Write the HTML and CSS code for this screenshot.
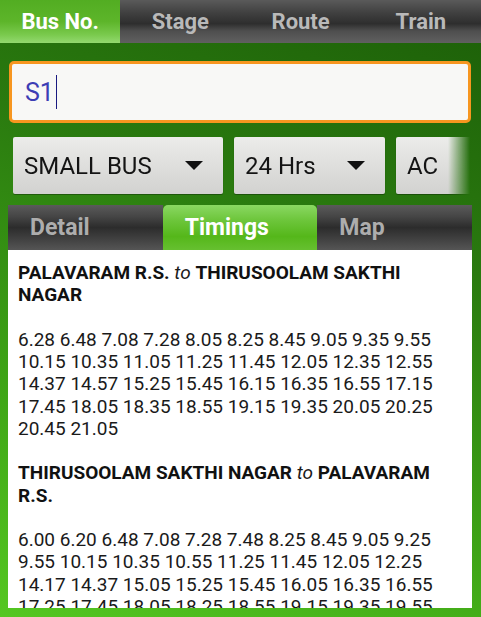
FILE: index.html
```html
<!DOCTYPE html>
<html>
<head>
<meta charset="utf-8">
<link rel="stylesheet" href="styles.css">
</head>
<body>
<div class="screen">
  <nav class="topbar">
    <div class="toptab active">Bus No.</div>
    <div class="toptab">Stage</div>
    <div class="toptab">Route</div>
    <div class="toptab">Train</div>
  </nav>
  <div class="search"><span class="query">S1</span><span class="caret"></span></div>
  <div class="filters">
    <div class="spinner s1"><span>SMALL BUS</span><i class="arrow"></i></div>
    <div class="spinner s2"><span>24 Hrs</span><i class="arrow"></i></div>
    <div class="spinner s3"><span>AC</span><i class="arrow"></i></div>
  </div>
  <div class="panel">
    <div class="subtabs">
      <div class="subtab">Detail</div>
      <div class="subtab active">Timings</div>
      <div class="subtab">Map</div>
    </div>
    <div class="content">
      <p class="route"><b>PALAVARAM R.S.</b> <i>to</i> <b>THIRUSOOLAM SAKTHI NAGAR</b></p>
      <p class="times">6.28 6.48 7.08 7.28 8.05 8.25 8.45 9.05 9.35 9.55 10.15 10.35 11.05 11.25 11.45 12.05 12.35 12.55 14.37 14.57 15.25 15.45 16.15 16.35 16.55 17.15 17.45 18.05 18.35 18.55 19.15 19.35 20.05 20.25 20.45 21.05</p>
      <p class="route"><b>THIRUSOOLAM SAKTHI NAGAR</b> <i>to</i> <b>PALAVARAM R.S.</b></p>
      <p class="times">6.00 6.20 6.48 7.08 7.28 7.48 8.25 8.45 9.05 9.25 9.55 10.15 10.35 10.55 11.25 11.45 12.05 12.25 14.17 14.37 15.05 15.25 15.45 16.05 16.35 16.55 17.25 17.45 18.05 18.25 18.55 19.15 19.35 19.55 20.15 20.35 21.05</p>
    </div>
  </div>
</div>
</body>
</html>
```
FILE: styles.css
```css
html, body {
  margin: 0;
  padding: 0;
}
body {
  width: 481px;
  height: 617px;
  overflow: hidden;
  font-family: Roboto, "Liberation Sans", sans-serif;
}
.screen {
  height: 617px;
  display: flex;
  flex-direction: column;
  background: linear-gradient(200deg, #1c5e08 0%, #2a7a0f 35%, #3ea416 70%, #55c722 100%);
  overflow: hidden;
}
.topbar {
  display: flex;
  height: 43px;
  flex: none;
}
.toptab {
  flex: 1;
  display: flex;
  align-items: center;
  justify-content: center;
  font-weight: 700;
  font-size: 22px;
  color: #b9b9b9;
  background: linear-gradient(#5a5a5a 0%, #404040 30%, #2e2e2e 55%, #4e4e4e 72%, #606060 100%);
}
.toptab.active {
  color: #fff;
  background: linear-gradient(#52ad22 0%, #5db52a 50%, #79c94c 80%, #93d96f 100%);
}
.search {
  margin: 18px 10px 0 9px;
  height: 56px;
  border: 3px solid #f7961f;
  border-radius: 5px;
  background: #f8f8f6;
  display: flex;
  align-items: center;
  padding-left: 13px;
  flex: none;
}
.query {
  font-size: 25px;
  color: #3d3db4;
}
.caret {
  width: 1.5px;
  height: 34px;
  background: #1a1a80;
  margin-left: 2px;
}
.filters {
  display: flex;
  gap: 11px;
  margin: 14px 11px 0 13px;
  height: 58px;
  overflow: hidden;
  flex: none;
  -webkit-mask-image: linear-gradient(to right, #000 calc(100% - 22px), transparent);
  mask-image: linear-gradient(to right, #000 calc(100% - 22px), transparent);
}
.spinner {
  flex: none;
  height: 57px;
  display: flex;
  align-items: center;
  justify-content: space-between;
  padding: 0 20px 0 11px;
  box-sizing: border-box;
  background: linear-gradient(#ececea, #dcdcda 60%, #d2d2d0);
  border-radius: 2px;
  box-shadow: 0 1px 1px rgba(0,0,0,.35);
  font-size: 24px;
  color: #141414;
}
.s1 { width: 210px; }
.s2 { width: 151px; }
.s3 { width: 130px; }
.arrow {
  width: 0;
  height: 0;
  border-left: 9px solid transparent;
  border-right: 9px solid transparent;
  border-top: 9px solid #111;
}
.panel {
  margin: 10px 9px 9px 8px;
  flex: 1;
  display: flex;
  flex-direction: column;
  min-height: 0;
}
.subtabs {
  display: flex;
  height: 45px;
  flex: none;
}
.subtab {
  flex: 1;
  display: flex;
  align-items: center;
  padding-left: 22px;
  font-weight: 700;
  font-size: 23px;
  color: #adadad;
  background: linear-gradient(#5a5a5a 0%, #464646 25%, #2c2c2c 50%, #3c3c3c 70%, #555 100%);
}
.subtab.active {
  color: #fff;
  border-radius: 5px 5px 0 0;
  background: linear-gradient(#8ad862 0%, #6cc53a 35%, #55b71a 70%, #66c030 100%);
}
.content {
  flex: 1;
  background: #fff;
  padding: 12px 10px 0 10px;
  overflow: hidden;
  font-size: 19px;
  color: #1a1a1a;
}
.content p {
  margin: 0 0 1.172em 0;
  line-height: 1.172;
}
.route b {
  font-weight: 700;
  color: #111;
}
.route i {
  font-weight: 400;
}
```
